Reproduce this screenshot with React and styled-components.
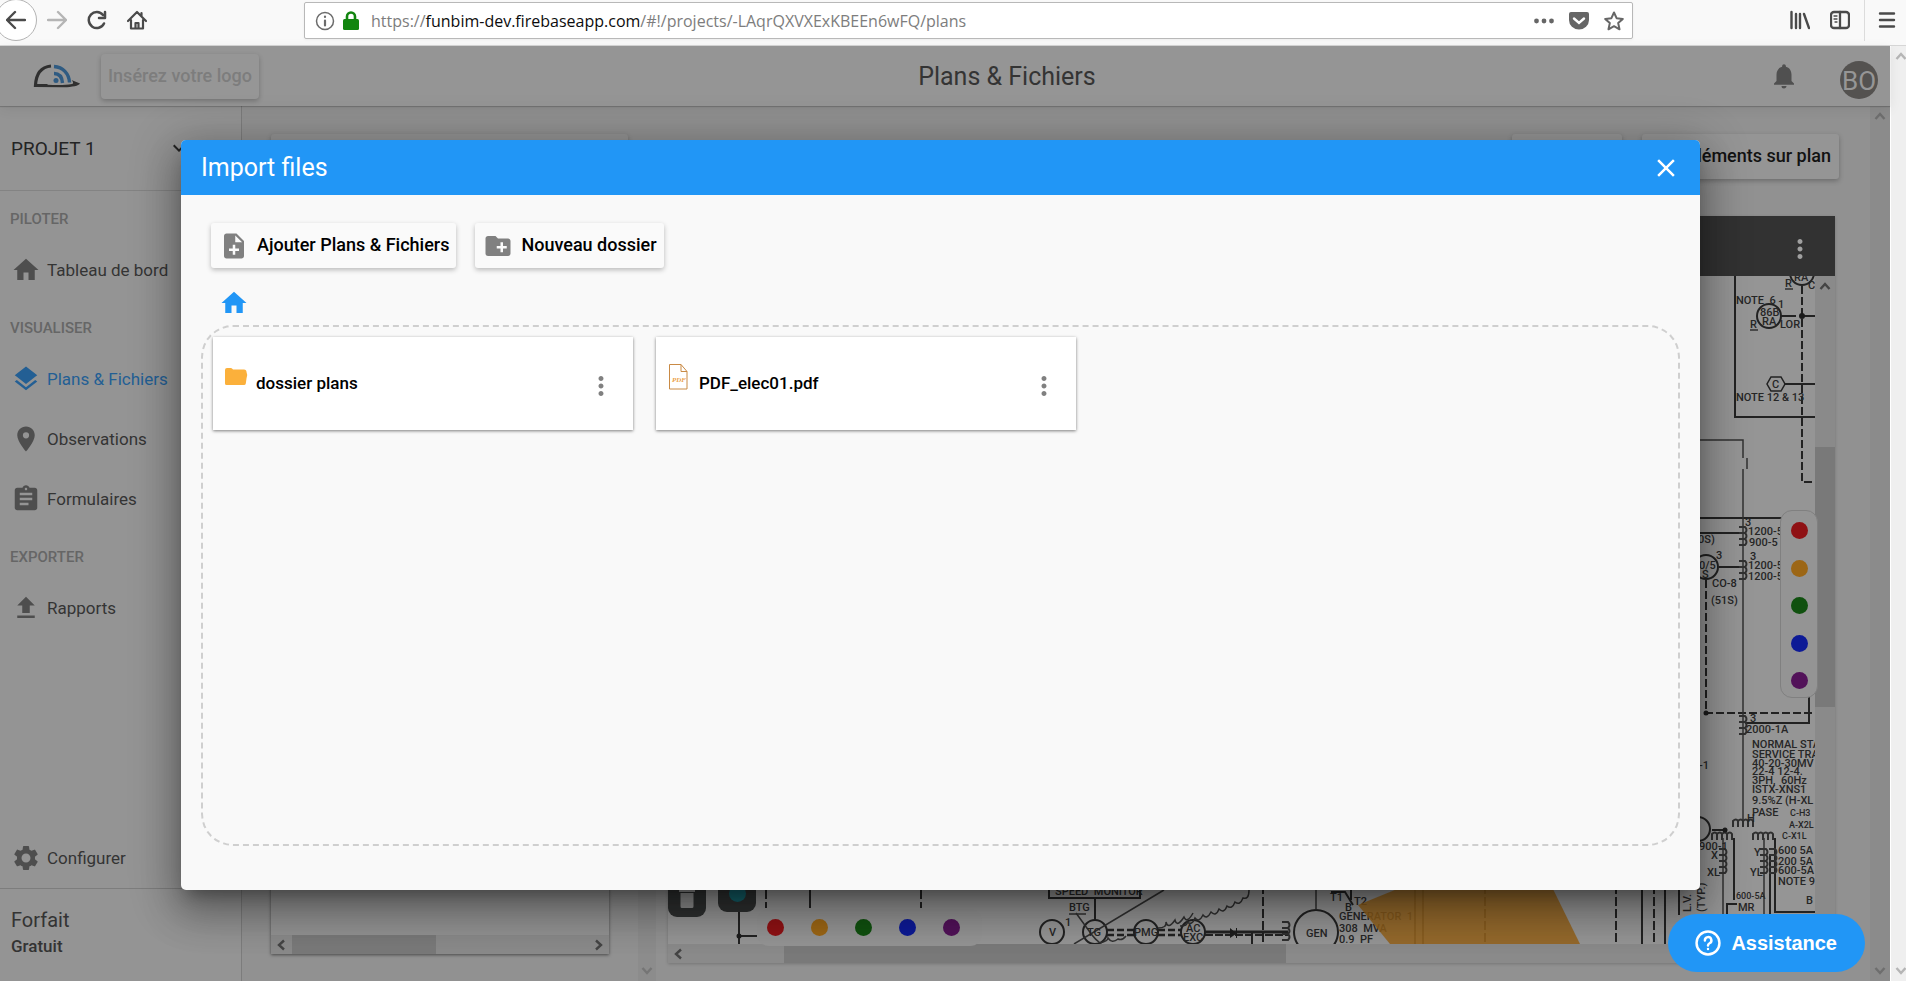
import React from "react";
import styled, { createGlobalStyle, css } from "styled-components";
import {
  MdHome,
  MdLayers,
  MdPlace,
  MdAssignment,
  MdSettings,
  MdNotifications,
  MdNoteAdd,
  MdCreateNewFolder,
  MdMoreVert,
  MdClose,
  MdKeyboardArrowDown,
} from "react-icons/md";

const GlobalStyle = createGlobalStyle`
  *, *::before, *::after { box-sizing: border-box; }
  body { margin: 0; overflow: hidden; font-family: Roboto, "Liberation Sans", sans-serif; }
  button { font-family: inherit; border: 0; padding: 0; background: none; cursor: pointer; }
  a { color: inherit; text-decoration: none; }
  svg { display: block; flex: none; }
`;

/* ---------- browser chrome ---------- */

const Window = styled.div`
  display: flex;
  flex-direction: column;
  height: 100vh;
`;

const BrowserBar = styled.div`
  display: flex;
  align-items: center;
  height: 46px;
  flex: none;
  padding-bottom: 5px;
  background: #f9f9f9;
  border-bottom: 1px solid #d6d6d6;
`;

const NavButtons = styled.div`
  display: flex;
  align-items: center;
  width: 304px;
  gap: 10px;
`;

const BackButton = styled.button`
  display: grid;
  place-items: center;
  width: 42px;
  height: 42px;
  margin-left: -5px;
  margin-top: -1px;
  border: 1px solid #b3b3b3;
  border-radius: 50%;
  background: #fff;
`;

const BarButton = styled.button`
  display: grid;
  place-items: center;
  width: 20px;
  height: 24px;
`;

const NavGroup = styled.div`
  display: flex;
  gap: 20px;
`;

const UrlField = styled.div`
  display: flex;
  align-items: center;
  flex: 1;
  height: 37px;
  margin-top: 1px;
  padding: 0 8px 0 10px;
  border: 1px solid #b8b8b8;
  border-radius: 2px;
  background: #fff;
  box-shadow: 0 1px 3px rgba(0, 0, 0, 0.05);
`;

const UrlText = styled.div`
  flex: 1;
  margin-left: 12px;
  font: 16px/24px "Open Sans", "Noto Sans", sans-serif;
  color: #7d7d7d;

  b {
    font-weight: 400;
    color: #0c0c0d;
  }
`;

const UrlIcons = styled.div`
  display: flex;
  align-items: center;
  gap: 8px;
`;

const UrlActions = styled.div`
  display: flex;
  gap: 15px;
`;

const BarRight = styled.div`
  display: flex;
  align-items: center;
  width: 273px;
  padding-right: 9px;
  justify-content: flex-end;
  gap: 20px;
`;

const BarDivider = styled.div`
  width: 1px;
  height: 41px;
  margin: 0 -8px 0 -6px;
  background: #dcdcdc;
`;

const Viewport = styled.div`
  display: flex;
  flex: 1;
  min-height: 0;
`;

/* ---------- scroll bars ---------- */

const Track = styled.div`
  display: flex;
  flex: none;
  align-items: center;
  flex-direction: ${(p) => (p.$vertical ? "column" : "row")};
  background: ${(p) => p.$track || "#8a8a8a"};
  color: ${(p) => p.$arrow || "#444"};
  ${(p) =>
    p.$vertical
      ? css`width: ${p.$size}px;`
      : css`height: ${p.$size}px;`}
`;

const TrackGap = styled.div`
  flex: ${(p) => p.$grow} 1 0;
`;

const Thumb = styled.div`
  flex: ${(p) => p.$grow} 1 0;
  align-self: stretch;
  background: #797979;
`;

const arrowTurn = { up: 0, right: 90, down: 180, left: 270 };

function Arrow({ dir }) {
  return (
    <svg width="20" height="20" viewBox="0 0 20 20">
      <path
        d="M5.500 13 10 8l4.500 5"
        transform={`rotate(${arrowTurn[dir]} 10 10)`}
        fill="none"
        stroke="currentColor"
        strokeWidth="2.400"
      />
    </svg>
  );
}

function Scrollbar({ vertical, size = 19, before, thumb, after, track, arrow }) {
  return (
    <Track $vertical={vertical} $size={size} $track={track} $arrow={arrow}>
      <Arrow dir={vertical ? "up" : "left"} />
      <TrackGap $grow={before} />
      {thumb > 0 && <Thumb $grow={thumb} />}
      <TrackGap $grow={after} />
      <Arrow dir={vertical ? "down" : "right"} />
    </Track>
  );
}

const PageScroll = styled.div`
  display: flex;
  width: 16px;
  flex: none;
  border-left: 1px solid #fff;
  overflow: hidden;
`;

/* ---------- application ---------- */

const AppArea = styled.div`
  position: relative;
  display: flex;
  flex-direction: column;
  flex: 1;
  min-width: 0;
  background: #919191;
`;

const Header = styled.header`
  position: relative;
  z-index: 1;
  display: flex;
  align-items: center;
  height: 60px;
  flex: none;
  padding: 0 12px 0 33px;
  background: #959595;
  box-shadow: 0 1px 1px rgba(0, 0, 0, 0.18), 0 3px 12px rgba(0, 0, 0, 0.07);
`;

const LogoButton = styled.button`
  height: 45px;
  margin-left: 20px;
  padding: 0 7px 1px;
  border-radius: 4px;
  background: #969696;
  box-shadow: 0 2px 5px rgba(0, 0, 0, 0.24);
  font-size: 18px;
  font-weight: 500;
  color: #7d7d7d;
`;

const PageTitle = styled.h1`
  flex: 1;
  margin: 0;
  padding-right: 14px;
  text-align: center;
  font-size: 25px;
  font-weight: 400;
  color: #343434;
`;

const HeaderActions = styled.div`
  display: flex;
  align-items: center;
  gap: 41px;
  color: #505050;
`;

const Avatar = styled.button`
  width: 38px;
  height: 38px;
  margin-top: 8px;
  border-radius: 50%;
  background: #545250;
  color: #969696;
  font-size: 26px;
  font-weight: 400;
  line-height: 40px;
`;

const Body = styled.div`
  display: flex;
  flex: 1;
  min-height: 0;
`;

const Sidebar = styled.nav`
  display: flex;
  flex-direction: column;
  width: 242px;
  flex: none;
  background: #949494;
  border-right: 1px solid #7c7c7c;
`;

const ProjectButton = styled.button`
  display: flex;
  align-items: center;
  justify-content: space-between;
  height: 85px;
  padding: 0 50px 0 11px;
  border-bottom: 1px solid #838383;
  font-size: 19px;
  color: #242424;
`;

const SectionTitle = styled.h2`
  height: 49px;
  margin: 0;
  padding: 8px 10px 0;
  font-size: 15px;
  font-weight: 500;
  line-height: 40px;
  color: #666;
`;

const NavLink = styled.a`
  display: flex;
  align-items: center;
  gap: 6px;
  height: 60px;
  padding-left: 11px;
  font-size: 17px;
  color: ${(p) => (p.$active ? "#235f94" : "#343434")};

  svg {
    color: ${(p) => (p.$active ? "#235f94" : "#4e4e4e")};
  }
`;

const SidebarFoot = styled.div`
  margin-top: auto;
`;

const PlanInfo = styled.div`
  height: 93px;
  padding: 18px 11px;
  border-top: 1px solid #7d7d7d;
  color: #333;
  font-size: 20px;
  line-height: 26px;

  strong {
    display: block;
    font-size: 17px;
    font-weight: 500;
  }
`;

const Main = styled.main`
  display: flex;
  flex-direction: column;
  flex: 1;
  min-width: 0;
  padding-top: 28px;
`;

const Toolbar = styled.div`
  display: flex;
  height: 45px;
  gap: 20px;
  margin: 0 31px 37px 29px;
`;

const raised = css`
  border-radius: 3px;
  box-shadow: 0 2px 5px rgba(0, 0, 0, 0.26);
`;

const SearchBox = styled.div`
  ${raised}
  width: 357px;
  margin-right: auto;
  background: #939393;
`;

const ToolButton = styled.button`
  ${raised}
  display: flex;
  align-items: center;
  justify-content: flex-end;
  width: ${(p) => p.$width}px;
  padding: 0 8px 2px;
  background: #959595;
  font-size: 18px;
  font-weight: 500;
  color: #121212;
`;

const Panels = styled.div`
  display: flex;
  flex: 1;
  min-height: 0;
  padding-left: 29px;
`;

const TreePanel = styled.section`
  display: flex;
  flex-direction: column;
  justify-content: flex-end;
  width: 338px;
  margin: 0 29px 27px 0;
  background: #949494;
  box-shadow: 0 1px 3px rgba(0, 0, 0, 0.5);
`;

const Viewer = styled.section`
  display: flex;
  flex-direction: column;
  flex: 1;
  min-width: 0;
  margin: 0 35px 18px 12px;
  box-shadow: 0 1px 3px rgba(0, 0, 0, 0.2);
`;

const ViewerHead = styled.div`
  display: flex;
  align-items: center;
  justify-content: flex-end;
  height: 60px;
  flex: none;
  padding: 6px 20px 0;
  background: #323232;
  color: #a0a0a0;
`;

const ViewerBody = styled.div`
  position: relative;
  display: flex;
  flex: 1;
  min-height: 0;
`;

const Canvas = styled.div`
  flex: 1;
  min-width: 0;
  overflow: hidden;
  background: #959595;

  svg {
    width: 100%;
    height: 100%;
  }
`;

const CanvasTool = styled.button`
  position: absolute;
  left: ${(p) => p.$left}px;
  bottom: ${(p) => p.$bottom}px;
  display: grid;
  place-items: center;
  width: 38px;
  height: 38px;
  border-radius: 9px;
  background: #2e3030;
`;

const palette = css`
  position: absolute;
  display: flex;
  background: #949494;
  border-radius: 12px;
`;

const BottomPalette = styled.div`
  ${palette}
  left: 89px;
  bottom: -2px;
  gap: 27px;
  width: 225px;
  height: 37px;
  padding: 10px;
`;

const SidePalette = styled.div`
  ${palette}
  flex-direction: column;
  align-items: center;
  justify-content: space-between;
  right: 17px;
  top: 234px;
  width: 38px;
  height: 188px;
  padding: 11px 0 8px;
  border: 1px solid #808080;
`;

const Swatch = styled.button`
  width: 17px;
  height: 17px;
  border-radius: 50%;
  background: ${(p) => p.$color};
`;

/* ---------- import dialog ---------- */

const Backdrop = styled.div`
  position: absolute;
  z-index: 2;
  inset: 0;
  display: flex;
  padding: 94px 190px 91px 181px;
`;

const Dialog = styled.section`
  display: flex;
  flex-direction: column;
  flex: 1;
  border-radius: 5px;
  overflow: hidden;
  background: #f9f9f9;
  box-shadow: 0 11px 15px -7px rgba(0, 0, 0, 0.3), 0 24px 38px 3px rgba(0, 0, 0, 0.2),
    0 9px 46px 8px rgba(0, 0, 0, 0.24);
`;

const DialogHead = styled.header`
  display: flex;
  align-items: center;
  justify-content: space-between;
  height: 55px;
  flex: none;
  padding: 0 19px 0 20px;
  background: #2196f6;
  color: #fff;

  h2 {
    margin: 0;
    font-size: 25px;
    font-weight: 400;
  }
`;

const DialogBody = styled.div`
  display: flex;
  flex-direction: column;
  flex: 1;
  padding: 28px 20px 44px 20px;
`;

const DialogActions = styled.div`
  display: flex;
  gap: 19px;
  padding-left: 10px;
`;

const ActionButton = styled.button`
  ${raised}
  display: flex;
  align-items: center;
  gap: 8px;
  height: 45px;
  padding: 0 7px 0 8px;
  background: #fafafa;
  font-size: 18px;
  font-weight: 500;
  line-height: 42px;
  color: #000;

  svg {
    color: #808080;
  }

  span {
    padding-bottom: 2px;
  }
`;

const Breadcrumb = styled.a`
  align-self: flex-start;
  margin: 20px 0 7px 18px;
  color: #2196f6;
`;

const DropZone = styled.div`
  display: flex;
  align-items: flex-start;
  gap: 23px;
  flex: 1;
  padding: 10px;
  border: 2px dashed #cfcfcf;
  border-radius: 32px;
`;

const FileCard = styled.article`
  display: flex;
  align-items: center;
  width: 420px;
  height: 93px;
  padding: 0 17px 0 11px;
  background: #fff;
  box-shadow: 0 1px 3px rgba(0, 0, 0, 0.5);
  font-size: 17px;
  font-weight: 500;
  color: #000;
`;

const FileIcon = styled.div`
  width: 32px;
  padding-bottom: 14px;
`;

const FileName = styled.span`
  flex: 1;
  padding-bottom: 2px;
`;

const MoreButton = styled.button`
  padding-top: 4px;
  color: #808080;
`;

const HelpButton = styled.button`
  position: absolute;
  z-index: 3;
  right: 25px;
  bottom: 9px;
  display: flex;
  align-items: center;
  gap: 10px;
  height: 58px;
  padding: 0 28px 0 27px;
  border-radius: 29px;
  background: #2196f6;
  color: #fff;
  font: bold 20px "Liberation Sans", sans-serif;
`;

/* ---------- drawings ---------- */

function Stroke({ size = 20, width = 2, color = "#4a4a4a", children }) {
  return (
    <svg
      width={size}
      height={size}
      viewBox="0 0 20 20"
      fill="none"
      stroke={color}
      strokeWidth={width}
      strokeLinecap="round"
      strokeLinejoin="round"
    >
      {children}
    </svg>
  );
}

const Logo = () => (
  <svg width="48" height="26" viewBox="0 0 48 26">
    <path d="M18 3C8 4 3 11 2.500 22.500h12" fill="none" stroke="#303030" strokeWidth="3.200" />
    <path d="M2 21.500c14 0 27 1.500 37-.5 2-.5 1-2.500-.5-4l8.500 3.500c-1 2.500-8 3.500-16 3.800L2 24z" fill="#303030" />
    <circle cx="23" cy="17.500" r="2.500" fill="#2f5b82" />
    <path d="M21 10.500c5 0 8 3.500 8.500 9.500M21 3.500c9 .5 15 7 15.500 16" fill="none" stroke="#2f5b82" strokeWidth="3.400" />
  </svg>
);

const Upload = () => (
  <svg width="30" height="30" viewBox="0 0 24 24" fill="currentColor">
    <path d="M9 16h6v-6h4l-7-7-7 7h4zm-4 2h14v2H5z" />
  </svg>
);

const Folder = () => (
  <svg width="24" height="20" viewBox="0 0 24 20" fill="#fbb03b">
    <path d="M1 3q0-2 2-2h4q1 0 2 1.500h11q2.500 0 2.500 2.500 1.500 3 0 6.500l-.7 5q-.3 1.500-1.800 1.500H2.500Q1 18 1 16.500z" />
  </svg>
);

const Pdf = () => (
  <svg width="22" height="26" viewBox="0 0 22 26" fill="none" stroke="#c98a45">
    <path d="M2.500.5h11.500l6 7v17.500H2.500zM14 .5v7h6" />
    <text x="5" y="18" fontFamily="Liberation Serif, serif" fontStyle="italic" fontWeight="700" fontSize="7" fill="#ec9f48" stroke="none">
      PDF
    </text>
  </svg>
);

const Trash = () => (
  <svg width="18" height="22" viewBox="0 0 18 22" fill="#8f8f8f">
    <path d="M5 1h8v2h4v2H1V3h4zM2.500 6h13v13.500q0 1.500-1.500 1.500H4q-1.500 0-1.500-1.500z" />
  </svg>
);

const labels = [
  [1736, 304, "NOTE  6"], [1778, 308, "1"], [1760, 316, "86B"], [1762, 325, "RA"],
  [1750, 328, "R"], [1780, 328, "LOR"], [1785, 287, "R"], [1794, 281, "RA"], [1808, 289, "C"],
  [1772, 388, "C"], [1736, 401, "NOTE 12 & 13"], [1745, 526, "3"], [1748, 535, "1200-5"],
  [1749, 546, "900-5"], [1698, 543, "0S)"], [1716, 559, "3"], [1699, 569, "0/5"], [1702, 578, "S"],
  [1750, 560, "3"], [1748, 569, "1200-5"], [1748, 580, "1200-5"], [1712, 587, "CO-8"],
  [1711, 604, "(51S)"], [1750, 722, "3"], [1746, 733, "2000-1A"], [1752, 748, "NORMAL STAT"],
  [1752, 758, "SERVICE TRAN"], [1752, 767, "40-20-30MV"], [1752, 775, "22-4 12-4."],
  [1752, 784, "3PH,  60Hz"], [1752, 793, "ISTX-XNS1"], [1752, 804, "9.5%Z (H-XL"],
  [1752, 816, "PASE"], [1747, 822, "H"], [1699, 769, "-1"], [1699, 850, "900-1"],
  [1711, 859, "X"], [1707, 876, "XL"], [1754, 856, "Y"], [1750, 876, "YL"],
  [1778, 854, "600 5A"], [1778, 865, "200 5A"], [1778, 874, "600-5A"], [1778, 885, "NOTE 9"],
  [1806, 904, "B"], [1738, 911, "MR"], [1055, 895, "SPEED  MONITOR"], [1069, 911, "BTG"],
  [1049, 936, "V"], [1065, 926, "1"], [1087, 936, "TG"], [1134, 936, "PMG"], [1186, 932, "AC"],
  [1183, 941, "EXC"], [1306, 937, "GEN"], [1330, 901, "T1"], [1354, 905, "T2"], [1345, 911, "B"],
  [1339, 920, "GENERATOR  1"], [1339, 932, "308  MVA"], [1339, 943, "0.9  PF"],
];

const smallLabels = [
  [1790, 816, "C-H3"], [1789, 828, "A-X2L"], [1782, 839, "C-X1L"], [1736, 899, "600-5A"],
];

const coilsV = [
  [1743, 527, 3], [1743, 561, 3], [1743, 716, 3], [1723, 849, 4], [1764, 849, 4], [1773, 849, 4], [1286, 922, 3],
];
const coilsH = [[1733, 821, 4], [1712, 834, 4], [1753, 834, 4]];

function PlanDrawing() {
  return (
    <svg aria-label="Plan électrique">
      <g transform="translate(-668 -276)">
        <g fill="none" stroke="#222" strokeWidth="2">
          <path d="M1735 270V417H1820M1784 384H1820M1700 518H1790M1700 533H1743M1719 567H1743M1745 723H1809V690" />
          <path d="M1771 377h10l4 7-4 7h-10l-4-7z" strokeWidth="1.500" />
          <circle cx="1802" cy="273" r="12" />
          <circle cx="1769" cy="316" r="12" />
          <circle cx="1706" cy="567" r="12" />
          <circle cx="1698" cy="829" r="12" />
          <circle cx="1052" cy="932" r="12" />
          <circle cx="1095" cy="932" r="12" />
          <circle cx="1146" cy="932" r="12" />
          <circle cx="1193" cy="932" r="12" />
          <circle cx="1316" cy="932" r="22" />
          <path d="M1781 316H1796M1800 316H1820" />
          <path d="M1802 286V482H1820M1706 580V713H1820" strokeDasharray="8 3" />
          <path d="M1712 830H1725M1734 838V900M1770 855V914M1775 838V912H1820M1727 914V904H1737" />
          <path d="M1049 885V898H1140V885M1095 898V920M810 885V908M739 912V944M739 936H757" />
          <path d="M766 890V908M921 890V908M1263 885V944M1616 885V944M1654 885V944" strokeDasharray="9 3" />
          <path d="M1485 885V944" strokeDasharray="9 3" strokeWidth="1.500" />
          <path d="M1107 930H1134M1158 930H1181M1107 935H1134M1158 935H1181" strokeWidth="2.400" strokeDasharray="7 3" />
          <path d="M1205 932H1288" strokeWidth="3" />
          <path d="M1205 935H1288" strokeWidth="2" strokeDasharray="8 2" />
          <path d="M1642 885V944M1665 885V944M1679 885V915" />
          <path d="M1331 892h14l8 13M1351 890v10M1252 932V944" />
        </g>
        <g fill="none" stroke="#303030" strokeWidth="1.500">
          <path d="M1700 440H1743V458M1747 458V469M1743 469V825M1723 838V914M1764 838V914" />
          <path d="M1164 890L1074 944M1316 885V910M1415 885V944M1423 885V944" />
          <path d="M1076 913l16 22q3 4 8 8q8-2 8-5q4 6 10 1q4 2 8-3" />
          <path d="M1158 928q9 0 8-6q2 8 9-2q2 8 9-3q3 7 9-4" />
          <path d="M1180 926q8 0 7-4q5 4 8-4q4 5 8-3q4 5 8-3q5 5 8-3q5 5 8-3q5 4 8-4q5 4 8-4q6 2 6-8q2-6-1-8" />
          <path d="M1785 289h8M1750 330h8M1069 914h17" />
          {coilsV.map(([x, y, n]) => (
            <path key={`${x}-${y}`} strokeWidth="2" d={`M${x - 4} ${y}` + "h6q3 3 0 6h-6".repeat(n)} />
          ))}
          {coilsH.map(([x, y, n]) => (
            <path key={`${x}-${y}`} strokeWidth="2" d={`M${x} ${y + 6}v-6` + "q3-3 5 0v6v-6".repeat(n)} />
          ))}
        </g>
        <g fill="#1c1c1c">
          <circle cx="1802" cy="316" r="3" />
          <circle cx="1706" cy="713" r="2.500" />
          <circle cx="1725" cy="830" r="2.500" />
          <circle cx="739" cy="936" r="2.500" />
          <path d="M1230 928l6 5v-5h1v10h-1v-4l-6 4z" />
        </g>
        <g fontFamily="Roboto, sans-serif" fontSize="11" fontWeight="500" fill="#262626">
          {labels.map(([x, y, t]) => (
            <text key={`${x}-${y}`} x={x} y={y} style={{ whiteSpace: "pre" }}>{t}</text>
          ))}
          <text transform="translate(1691 912) rotate(-90)">L.V.</text>
          <text transform="translate(1705 912) rotate(-90)">(TYP.)</text>
        </g>
        <g fontFamily="Roboto, sans-serif" fontSize="9" fontWeight="500" fill="#262626">
          {smallLabels.map(([x, y, t]) => (
            <text key={`${x}-${y}`} x={x} y={y}>{t}</text>
          ))}
        </g>
        <path d="M1358 905L1407 885H1551L1580 944H1390z" fill="#94621a" fillOpacity="0.850" />
      </g>
    </svg>
  );
}

/* ---------- content ---------- */

const swatches = [
  ["rouge", "#8f1114"],
  ["orange", "#9c6615"],
  ["vert", "#10510f"],
  ["bleu", "#0d1a96"],
  ["violet", "#521259"],
];

const sections = [
  { title: "PILOTER", items: [{ label: "Tableau de bord", icon: MdHome }] },
  {
    title: "VISUALISER",
    items: [
      { label: "Plans & Fichiers", icon: MdLayers, active: true },
      { label: "Observations", icon: MdPlace },
      { label: "Formulaires", icon: MdAssignment },
    ],
  },
  { title: "EXPORTER", items: [{ label: "Rapports", icon: Upload }] },
];

const files = [
  { name: "dossier plans", icon: Folder },
  { name: "PDF_elec01.pdf", icon: Pdf },
];

function BrowserChrome() {
  return (
    <BrowserBar>
      <NavButtons>
        <BackButton aria-label="Précédent">
          <Stroke width={2.4}><path d="M19 10H1M9 2L1 10l8 8" /></Stroke>
        </BackButton>
        <NavGroup>
          <BarButton aria-label="Suivant">
            <Stroke width={2.4} color="#b5b5b5"><path d="M1 10h18M11 2l8 8-8 8" /></Stroke>
          </BarButton>
          <BarButton aria-label="Actualiser">
            <Stroke width={2.5}><path d="M17 13.500A8 8 0 1 1 16 5M18 2v6h-6" /></Stroke>
          </BarButton>
          <BarButton aria-label="Accueil">
            <Stroke width={2.2}>
              <path d="M1 11l9-9 9 9M4 10v8.500h12V10M14.500 3v3" />
              <path d="M8.500 18v-5h3v5" />
            </Stroke>
          </BarButton>
        </NavGroup>
      </NavButtons>
      <UrlField>
        <UrlIcons>
          <Stroke width={1.5} color="#6b6b6b">
            <circle cx="10" cy="10" r="8.500" />
            <path d="M10 9.500v5M10 5.500v.5" strokeWidth="2.200" />
          </Stroke>
          <svg width="16" height="20" viewBox="0 0 16 20">
            <path d="M4 9V5.500a4 4 0 0 1 8 0V9" fill="none" stroke="#12850f" strokeWidth="2.600" />
            <rect y="8" width="16" height="11" rx="1.500" fill="#12850f" />
          </svg>
        </UrlIcons>
        <UrlText>
          https://<b>funbim-dev.firebaseapp.com</b>/#!/projects/-LAqrQXVXExKBEEn6wFQ/plans
        </UrlText>
        <UrlActions>
          <BarButton aria-label="Actions">
            <svg width="20" height="20" viewBox="0 0 20 20" fill="#666">
              <circle cx="2.500" cy="10" r="2.400" />
              <circle cx="10" cy="10" r="2.400" />
              <circle cx="17.500" cy="10" r="2.400" />
            </svg>
          </BarButton>
          <BarButton aria-label="Pocket">
            <svg width="20" height="20" viewBox="0 0 20 20">
              <path d="M2 1h16q2 0 2 2v6a10 9.500 0 0 1-20 0V3q0-2 2-2z" fill="#666" />
              <path d="M5 7.500l5 4.500 5-4.500" fill="none" stroke="#fff" strokeWidth="2.400" strokeLinecap="round" />
            </svg>
          </BarButton>
          <BarButton aria-label="Marque-page">
            <Stroke color="#666">
              <path d="M10 1.500l2.600 5.700 6.200.7-4.600 4.200 1.300 6.200L10 15.200l-5.500 3.100 1.300-6.200L1.200 7.900l6.200-.7z" />
            </Stroke>
          </BarButton>
        </UrlActions>
      </UrlField>
      <BarRight>
        <BarButton aria-label="Bibliothèque">
          <Stroke width={2.4}><path d="M1.500 2v16M6 4v14M10 4v14M14 4l5 14" /></Stroke>
        </BarButton>
        <BarButton aria-label="Panneau latéral">
          <Stroke width={2.3}>
            <rect x="1" y="2" width="18" height="16" rx="3" />
            <path d="M10 2v16" />
            <path d="M4 6h3M4 9h3M5 12h2" strokeWidth="1.300" />
          </Stroke>
        </BarButton>
        <BarDivider />
        <BarButton aria-label="Menu">
          <Stroke width={2.4}><path d="M3 3.500h14M3 10h14M3 16.500h14" /></Stroke>
        </BarButton>
      </BarRight>
    </BrowserBar>
  );
}

const Swatches = () =>
  swatches.map(([name, color]) => <Swatch key={name} $color={color} aria-label={name} />);

export default function App() {
  return (
    <Window>
      <GlobalStyle />
      <BrowserChrome />
      <Viewport>
        <AppArea>
          <Header>
            <Logo />
            <LogoButton>Insérez votre logo</LogoButton>
            <PageTitle>Plans &amp; Fichiers</PageTitle>
            <HeaderActions>
              <MdNotifications size={30} />
              <Avatar>BO</Avatar>
            </HeaderActions>
          </Header>
          <Body>
            <Sidebar>
              <ProjectButton>
                PROJET 1
                <MdKeyboardArrowDown size={24} />
              </ProjectButton>
              {sections.map((section) => (
                <div key={section.title}>
                  <SectionTitle>{section.title}</SectionTitle>
                  {section.items.map(({ label, icon: Icon, active }) => (
                    <NavLink key={label} href="#" $active={active}>
                      <Icon size={30} />
                      {label}
                    </NavLink>
                  ))}
                </div>
              ))}
              <SidebarFoot>
                <NavLink href="#">
                  <MdSettings size={30} />
                  Configurer
                </NavLink>
                <PlanInfo>
                  Forfait
                  <strong>Gratuit</strong>
                </PlanInfo>
              </SidebarFoot>
            </Sidebar>
            <Main>
              <Toolbar>
                <SearchBox />
                <ToolButton $width={110} aria-label="Filtrer" />
                <ToolButton $width={197}>Éléments sur plan</ToolButton>
              </Toolbar>
              <Panels>
                <TreePanel>
                  <Scrollbar before={1} thumb={144} after={153} />
                </TreePanel>
                <Scrollbar vertical size={18} before={1} thumb={0} after={1} track="#8c8c8c" arrow="#757575" />
                <Viewer>
                  <ViewerHead>
                    <MdMoreVert size={30} />
                  </ViewerHead>
                  <ViewerBody>
                    <Canvas>
                      <PlanDrawing />
                    </Canvas>
                    <Scrollbar vertical size={20} before={151} thumb={260} after={217} />
                    <CanvasTool $left={0} $bottom={27} aria-label="Supprimer">
                      <Trash />
                    </CanvasTool>
                    <CanvasTool $left={50} $bottom={32} aria-label="Couleur">
                      <Swatch as="span" $color="#14626b" />
                    </CanvasTool>
                    <BottomPalette><Swatches /></BottomPalette>
                    <SidePalette><Swatches /></SidePalette>
                  </ViewerBody>
                  <Scrollbar before={96} thumb={502} after={529} />
                </Viewer>
              </Panels>
            </Main>
            <Scrollbar vertical size={20} before={1} thumb={0} after={1} track="#8b8b8b" arrow="#6e6e6e" />
          </Body>
          <Backdrop>
            <Dialog role="dialog" aria-labelledby="import-title">
              <DialogHead>
                <h2 id="import-title">Import files</h2>
                <button aria-label="Fermer">
                  <MdClose size={30} color="#fff" />
                </button>
              </DialogHead>
              <DialogBody>
                <DialogActions>
                  <ActionButton>
                    <MdNoteAdd size={30} />
                    <span>Ajouter Plans &amp; Fichiers</span>
                  </ActionButton>
                  <ActionButton>
                    <MdCreateNewFolder size={30} />
                    <span>Nouveau dossier</span>
                  </ActionButton>
                </DialogActions>
                <Breadcrumb href="#" aria-label="Racine">
                  <MdHome size={30} />
                </Breadcrumb>
                <DropZone>
                  {files.map(({ name, icon: Icon }) => (
                    <FileCard key={name}>
                      <FileIcon><Icon /></FileIcon>
                      <FileName>{name}</FileName>
                      <MoreButton aria-label="Options">
                        <MdMoreVert size={30} />
                      </MoreButton>
                    </FileCard>
                  ))}
                </DropZone>
              </DialogBody>
            </Dialog>
          </Backdrop>
          <HelpButton>
            <Stroke size={26} width={1.9} color="#fff">
              <circle cx="10" cy="10" r="8.800" />
              <path d="M7.600 8a2.500 2.500 0 1 1 3.600 2.200q-1.200.6-1.200 1.800M10 14.600v.1" />
            </Stroke>
            Assistance
          </HelpButton>
        </AppArea>
        <PageScroll>
          <Scrollbar vertical size={20} before={1} thumb={0} after={1} track="#efefef" arrow="#b5b5b5" />
        </PageScroll>
      </Viewport>
    </Window>
  );
}
